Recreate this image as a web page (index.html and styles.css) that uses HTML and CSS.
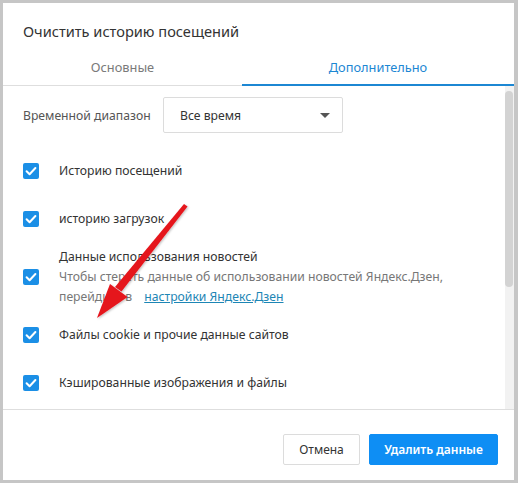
FILE: index.html
```html
<!DOCTYPE html>
<html lang="ru">
<head>
<meta charset="utf-8">
<title>Очистить историю посещений</title>
<link rel="stylesheet" href="styles.css">
</head>
<body>
<div class="dialog">
  <div class="title">Очистить историю посещений</div>
  <div class="tabs">
    <div class="tab">Основные</div>
    <div class="tab active">Дополнительно</div>
  </div>
  <div class="body">
    <div class="content">
      <div class="range">
        <span class="range-label">Временной диапазон</span>
        <div class="select">
          <span>Все время</span>
          <span class="caret"></span>
        </div>
      </div>
      <div class="item">
        <span class="check"><svg viewBox="0 0 16 16"><path d="M3.6 8.2l3 3 5.8-6.2"/></svg></span>
        <span class="label">Историю посещений</span>
      </div>
      <div class="item">
        <span class="check"><svg viewBox="0 0 16 16"><path d="M3.6 8.2l3 3 5.8-6.2"/></svg></span>
        <span class="label">историю загрузок</span>
      </div>
      <div class="item multi">
        <span class="check"><svg viewBox="0 0 16 16"><path d="M3.6 8.2l3 3 5.8-6.2"/></svg></span>
        <div class="label">
          <div>Данные использования новостей</div>
          <div class="note">Чтобы стереть данные об использовании новостей Яндекс.Дзен,</div>
          <div class="note">перейдите в <a class="link" href="#">настройки Яндекс.Дзен</a></div>
        </div>
      </div>
      <div class="item">
        <span class="check"><svg viewBox="0 0 16 16"><path d="M3.6 8.2l3 3 5.8-6.2"/></svg></span>
        <span class="label">Файлы cookie и прочие данные сайтов</span>
      </div>
      <div class="item">
        <span class="check"><svg viewBox="0 0 16 16"><path d="M3.6 8.2l3 3 5.8-6.2"/></svg></span>
        <span class="label">Кэшированные изображения и файлы</span>
      </div>
    </div>
    <div class="scrollbar"><div class="thumb"></div></div>
  </div>
  <div class="footer">
    <button class="btn">Отмена</button>
    <button class="btn primary">Удалить данные</button>
  </div>
  <svg class="pointer" viewBox="0 0 518 483" width="518" height="483">
    <defs>
      <filter id="soft" x="-20%" y="-20%" width="140%" height="140%">
        <feDropShadow dx="1" dy="1" stdDeviation="1.2" flood-color="#000" flood-opacity="0.25"/>
      </filter>
    </defs>
    <g filter="url(#soft)" fill="#e5141c">
      <polygon points="184,204 187.5,206.5 121.5,291.5 115,287"/>
      <polygon points="97,318 127.5,297 110,284"/>
    </g>
  </svg>
</div>
</body>
</html>
```

FILE: styles.css
```css
* { box-sizing: border-box; }

html, body {
  margin: 0;
  padding: 0;
}

body {
  width: 518px;
  height: 483px;
  overflow: hidden;
  background: #c6c6c6;
  font-family: "Noto Sans", "Open Sans", sans-serif;
  font-size: 12.2px;
  color: #333;
}

.dialog {
  position: relative;
  width: 518px;
  height: 483px;
  border-style: solid;
  border-color: #c6c6c6;
  border-width: 3px 4px 3px 3px;
  background: #fff;
  display: flex;
  flex-direction: column;
}

.title {
  padding: 17px 0 0 20px;
  font-size: 14.6px;
  line-height: 22px;
  color: #333;
}

.tabs {
  display: grid;
  grid-template-columns: 239px 1fr;
  border-bottom: 1px solid #dedede;
}

.tab {
  padding: 15px 0 7px;
  line-height: 20px;
  text-align: center;
  color: #7a7a7a;
  font-size: 12.8px;
  border-bottom: 2px solid transparent;
  margin-bottom: -1px;
}

.tab.active {
  color: #1c87d3;
  border-bottom-color: #1c87d3;
}

.body {
  height: 324px;
  flex: none;
  display: flex;
  border-bottom: 1px solid #dedede;
}

.content {
  flex: 1;
  padding: 11px 0 0 20px;
  overflow: hidden;
}

.range {
  display: flex;
  align-items: center;
  height: 36px;
  margin-bottom: 14px;
}

.range-label {
  width: 140px;
  color: #555;
}

.select {
  width: 180px;
  height: 36px;
  border: 1px solid #dcdcdc;
  border-radius: 2px;
  display: flex;
  align-items: center;
  justify-content: space-between;
  padding: 0 12px 0 16px;
  color: #333;
}

.caret {
  width: 0;
  height: 0;
  border-left: 5px solid transparent;
  border-right: 5px solid transparent;
  border-top: 5px solid #555;
}

.item {
  display: flex;
  align-items: center;
  min-height: 48px;
  line-height: 20px;
}

.item.multi {
  padding: 4px 0;
}

.check {
  flex: none;
  width: 16px;
  height: 16px;
  border-radius: 2px;
  background: #1b8fe6;
  margin-right: 20px;
  display: flex;
}

.check svg {
  width: 16px;
  height: 16px;
  fill: none;
  stroke: #fff;
  stroke-width: 2;
  stroke-linecap: round;
  stroke-linejoin: round;
}

.note {
  color: #777;
}

.link {
  color: #1d86b5;
  text-decoration: underline;
  margin-left: 9px;
}

.scrollbar {
  width: 9px;
  flex: none;
  background: #f2f2f2;
  padding: 5px 1px 0 0;
}

.thumb {
  height: 196px;
  background: #d3d3d3;
  border-radius: 4px;
}

.footer {
  flex: 1;
  display: flex;
  justify-content: flex-end;
  align-items: flex-start;
  gap: 9px;
  padding: 24px 16px 0 0;
}

.btn {
  height: 31px;
  font-family: inherit;
  font-size: 12px;
  border-radius: 2px;
  border: 1px solid #dcdcdc;
  background: #fff;
  color: #333;
  padding: 0;
}

.btn:first-child { width: 77px; }

.btn.primary {
  width: 129px;
  background: #0e8ef4;
  border-color: #0e8ef4;
  color: #fff;
  font-weight: 600;
}

.pointer {
  position: absolute;
  left: -3px;
  top: -3px;
  pointer-events: none;
}
```
